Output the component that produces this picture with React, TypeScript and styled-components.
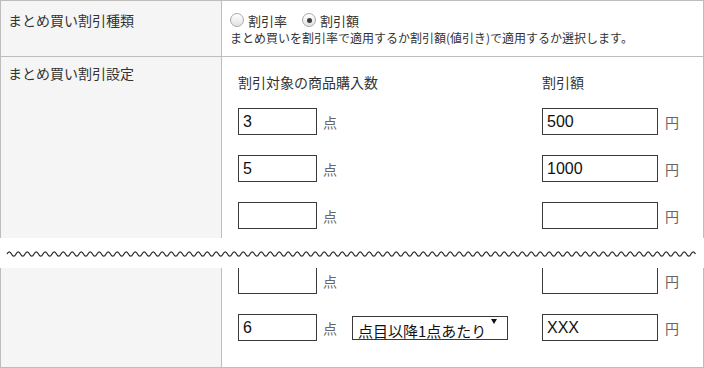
import React from 'react';
import styled, { createGlobalStyle } from 'styled-components';

const COLORS = {
  BORDER: '#bdbdbd',
  LABEL_BG: '#f5f5f5',
  TEXT: '#333333',
  INPUT_BORDER: '#3a3a3a',
};

const JP_FONT = `Meiryo, "Noto Sans CJK JP", "Noto Sans", sans-serif`;

const GlobalStyle = createGlobalStyle`
  body {
    margin: 0;
    background: #ffffff;
    font-family: ${JP_FONT};
    color: ${COLORS.TEXT};
  }
`;

const Table = styled.div`
  width: 704px;
`;

const Row = styled.div<{ $top?: boolean; $bottom?: boolean; $height: number }>`
  display: grid;
  grid-template-columns: 221px 1fr;
  height: ${(p) => p.$height}px;
  border-left: 1px solid ${COLORS.BORDER};
  border-right: 1px solid ${COLORS.BORDER};
  border-top: ${(p) => (p.$top ? `1px solid ${COLORS.BORDER}` : 'none')};
  border-bottom: ${(p) => (p.$bottom ? `1px solid ${COLORS.BORDER}` : 'none')};
  box-sizing: border-box;
  overflow: hidden;
`;

const LabelCell = styled.div<{ $padTop: number }>`
  background: ${COLORS.LABEL_BG};
  border-right: 1px solid ${COLORS.BORDER};
  padding: ${(p) => p.$padTop}px 0 0 7px;
  font-size: 14px;
  line-height: 20px;
`;

const ValueCell = styled.div`
  padding: 9px 0 0 8px;
`;

const RadioLine = styled.div`
  display: flex;
  align-items: center;
  height: 20px;
  font-size: 13px;
`;

const RadioOption = styled.label`
  display: flex;
  align-items: center;
  gap: 4px;
  margin-right: 15px;
`;

const RadioCircle = styled.span<{ $checked?: boolean }>`
  position: relative;
  width: 14px;
  height: 14px;
  box-sizing: border-box;
  border-radius: 50%;
  border: 1px solid #a9a9a9;
  background: linear-gradient(#ffffff, #e2e2e2);

  &::after {
    content: '';
    display: ${(p) => (p.$checked ? 'block' : 'none')};
    position: absolute;
    left: 3.5px;
    top: 3.5px;
    width: 5px;
    height: 5px;
    border-radius: 50%;
    background: #3c3c3c;
  }
`;

const Description = styled.div`
  font-size: 12px;
  line-height: 16px;
`;

const SettingsCell = styled.div<{ $alignEnd?: boolean }>`
  display: flex;
  flex-direction: column;
  justify-content: ${(p) => (p.$alignEnd ? 'flex-end' : 'flex-start')};
  gap: 20px;
  padding: ${(p) => (p.$alignEnd ? '0 0 26px 16px' : '15px 0 0 16px')};
  overflow: hidden;
`;

const SettingsLine = styled.div`
  display: grid;
  grid-template-columns: 304px auto;
  align-items: start;
`;

const ColumnHeader = styled.div`
  font-size: 14px;
  line-height: 20px;
  margin-bottom: -4px;
`;

const Group = styled.div`
  display: flex;
  align-items: center;
`;

const TextBox = styled.div<{ $width: number }>`
  width: ${(p) => p.$width}px;
  height: 27px;
  box-sizing: border-box;
  border: 1px solid ${COLORS.INPUT_BORDER};
  padding: 0 4px;
  font-family: "Liberation Sans", Arial, sans-serif;
  font-size: 16px;
  line-height: 25px;
  color: #111;
`;

const Unit = styled.span<{ $gap: number }>`
  margin-left: ${(p) => p.$gap}px;
  font-size: 14px;
  color: #666;
`;

const SelectBox = styled.div`
  position: relative;
  margin-left: 15px;
  width: 156px;
  height: 24px;
  box-sizing: border-box;
  border: 1px solid ${COLORS.INPUT_BORDER};
  padding: 0 0 0 5px;
  font-size: 15px;
  line-height: 27px;
  color: #111;
  overflow: hidden;
  white-space: nowrap;

  &::after {
    content: '';
    position: absolute;
    right: 10px;
    top: 2px;
    border-left: 3px solid transparent;
    border-right: 3px solid transparent;
    border-top: 5px solid #111;
  }
`;

const Break = styled.div`
  height: 30px;
  background: #ffffff;
  display: flex;
  align-items: center;
`;

const Wave = () => {
  const start = 7;
  const end = 697;
  const half = 4.5;
  const steps = Math.floor((end - start) / half);
  let d = `M${start} 16 q${half / 2} -4.4 ${half} 0`;
  for (let i = 1; i < steps; i += 1) d += ` t${half} 0`;
  return (
    <svg width="704" height="30" viewBox="0 0 704 30">
      <path d={d} fill="none" stroke="#2a2a2a" strokeWidth="1.2" />
    </svg>
  );
};

type LineData = { count: string; amount: string; select?: boolean };

const topLines: LineData[] = [
  { count: '3', amount: '500' },
  { count: '5', amount: '1000' },
  { count: '', amount: '' },
];

const bottomLines: LineData[] = [
  { count: '', amount: '' },
  { count: '6', amount: 'XXX', select: true },
];

const SettingRow = ({ line }: { line: LineData }) => (
  <SettingsLine>
    <Group>
      <TextBox $width={79}>{line.count}</TextBox>
      <Unit $gap={6}>点</Unit>
      {line.select && <SelectBox>点目以降1点あたり</SelectBox>}
    </Group>
    <Group>
      <TextBox $width={116}>{line.amount}</TextBox>
      <Unit $gap={7}>円</Unit>
    </Group>
  </SettingsLine>
);

export default function App() {
  return (
    <>
      <GlobalStyle />
      <Table>
        <Row $top $bottom $height={57}>
          <LabelCell $padTop={9}>まとめ買い割引種類</LabelCell>
          <ValueCell>
            <RadioLine>
              <RadioOption>
                <RadioCircle />
                割引率
              </RadioOption>
              <RadioOption>
                <RadioCircle $checked />
                割引額
              </RadioOption>
            </RadioLine>
            <Description>
              まとめ買いを割引率で適用するか割引額(値引き)で適用するか選択します。
            </Description>
          </ValueCell>
        </Row>
        <Row $height={181}>
          <LabelCell $padTop={6}>まとめ買い割引設定</LabelCell>
          <SettingsCell>
            <SettingsLine>
              <ColumnHeader>割引対象の商品購入数</ColumnHeader>
              <ColumnHeader>割引額</ColumnHeader>
            </SettingsLine>
            {topLines.map((line, i) => (
              <SettingRow key={i} line={line} />
            ))}
          </SettingsCell>
        </Row>
        <Break>
          <Wave />
        </Break>
        <Row $bottom $height={100}>
          <LabelCell $padTop={0} />
          <SettingsCell $alignEnd>
            {bottomLines.map((line, i) => (
              <SettingRow key={i} line={line} />
            ))}
          </SettingsCell>
        </Row>
      </Table>
    </>
  );
}
